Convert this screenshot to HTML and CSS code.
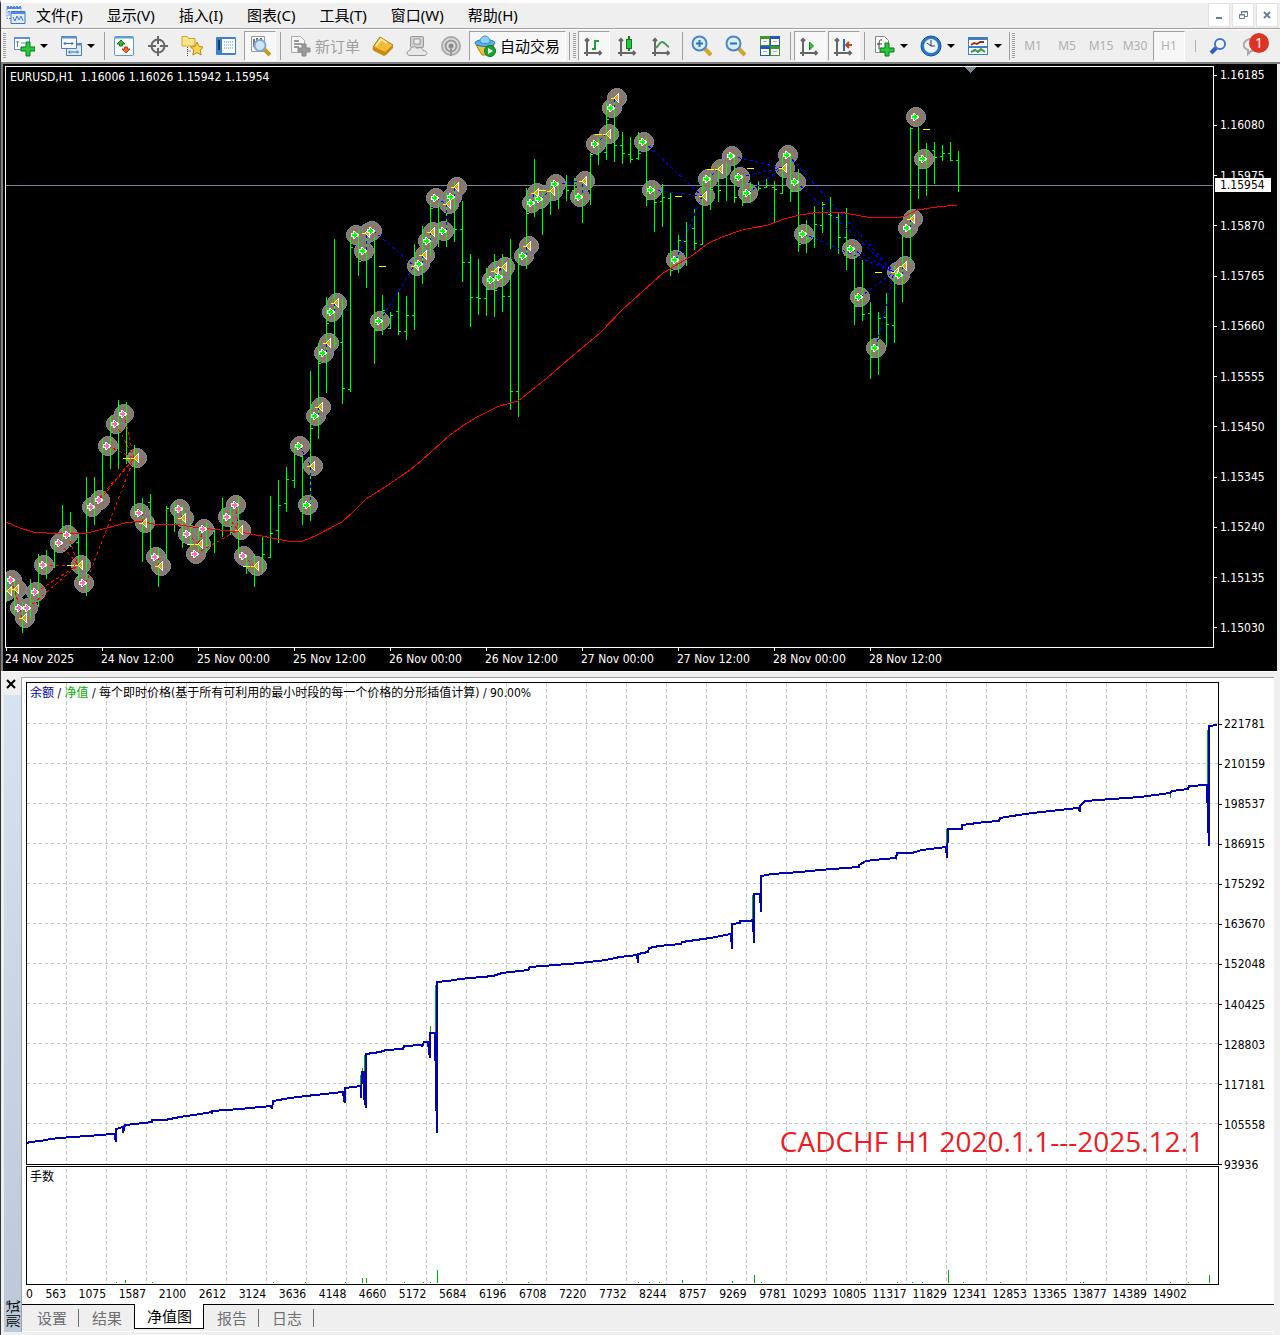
FILE: index.html
```html
<!DOCTYPE html>
<html lang="zh-CN">
<head>
<meta charset="utf-8">
<meta name="viewport" content="width=device-width, initial-scale=1">
<title>EURUSD,H1</title>
<link rel="stylesheet" href="styles.css">
</head>
<body>
<div class="window">
  <header class="menubar">
    <svg class="app-icon" width="20" height="20" viewBox="0 0 20 20" aria-hidden="true"><path d="M1 1.500h14v12H1z" fill="#fff" stroke="#4d8be0" stroke-dasharray="2 1"/><path d="M1 3h14" stroke="#4d8be0" stroke-width="2"/><path d="M3 11V6M2 7l1-1 1 1M6 8h3" stroke="#4d8be0" fill="none"/><path d="M5 6.500h14v12H5z" fill="#e4eefb" stroke="#3a78d2"/><path d="M5 8h14" stroke="#4d8be0" stroke-width="2"/><path d="M7 12l2 4 2-5 2 4 2-4 2 5" stroke="#3a78d2" fill="none"/></svg>
    <nav class="menus" aria-label="菜单">
      <button class="menu">文件(F)</button>
      <button class="menu">显示(V)</button>
      <button class="menu">插入(I)</button>
      <button class="menu">图表(C)</button>
      <button class="menu">工具(T)</button>
      <button class="menu">窗口(W)</button>
      <button class="menu">帮助(H)</button>
    </nav>
    <div class="window-controls">
      <button aria-label="最小化"><svg width="12" height="12" viewBox="0 0 12 12"><path d="M3 9h6" stroke="#6d7f92" stroke-width="2"/></svg></button>
      <button aria-label="还原"><svg width="12" height="12" viewBox="0 0 12 12"><path d="M4.500 5V2.500h6v5H8M4 3h7M2.500 5.500h5v4h-5zM2 6h6" fill="none" stroke="#6d7f92"/></svg></button>
      <button aria-label="关闭"><svg width="12" height="12" viewBox="0 0 12 12"><path d="M3 3l6 6M9 3l-6 6" stroke="#6d7f92" stroke-width="2"/></svg></button>
    </div>
  </header>

  <div class="toolbar" role="toolbar" aria-label="工具栏">
    <span class="grip"></span>
    <button class="tool tool-drop" aria-label="新图表"><svg class="icon" viewBox="0 0 22 22"><path d="M1.500 2.500h15v12h-15z" fill="#fff" stroke="#5b93cc"/><path d="M1 3h16" stroke="#5b93cc" stroke-width="2"/><path d="M4.500 12V6M3 7.500L4.500 6 6 7.500M8 8h4" stroke="#6688aa" fill="none"/><path d="M13 7h4v5h5v4h-5v5h-4v-5H8v-4h5z" fill="#27c83c" stroke="#0a7a18"/></svg><span class="caret"></span></button>
    <button class="tool tool-drop" aria-label="模板组"><svg class="icon" viewBox="0 0 22 22"><path d="M6.500 8.500h15v12h-15z" fill="#dcebfa" stroke="#4a7fbd"/><path d="M6 9.500h16" stroke="#5b93cc" stroke-width="2"/><path d="M1.500 1.500h15v12h-15z" fill="#f4f9ff" stroke="#4a7fbd"/><path d="M1 2.500h16" stroke="#5b93cc" stroke-width="2"/><path d="M4 8.500h9M5.500 7L4 8.500 5.500 10M11.500 7L13 8.500 11.500 10M9 17h9M10 15.500L8.500 17l1.500 1.500M17 15.500l1.500 1.500-1.500 1.500" stroke="#456a96" fill="none"/></svg><span class="caret"></span></button>
    <span class="divider"></span>
    <button class="tool" aria-label="市场报价"><svg class="icon" viewBox="0 0 22 22"><rect x="1.500" y="1.500" width="19" height="19" rx="1" fill="#fff" stroke="#5a9bd8"/><path d="M2 2.500h18" stroke="#5a9bd8" stroke-width="2"/><path d="M8 5l4 4H9.500v2h-3V9H4z" fill="#35b535" stroke="#177a17"/><path d="M13 18l-4-4h2.500v-2h3v2H17z" fill="#f06a30" stroke="#b03c10"/></svg></button>
    <button class="tool" aria-label="十字准线"><svg class="icon" viewBox="0 0 22 22"><circle cx="11" cy="11" r="6.500" fill="none" stroke="#666" stroke-width="2"/><path d="M11 1v8M11 13v8M1 11h8M13 11h8" stroke="#666" stroke-width="2"/></svg></button>
    <button class="tool" aria-label="导航"><svg class="icon" viewBox="0 0 22 22"><path d="M1 11V1.500h5.500l1 2H14V11z" fill="#fbe58a" stroke="#cda62c"/><path d="M6.500 12v9M6.500 16h3" stroke="#555" stroke-dasharray="1 1"/><path d="M16 7l2 4.500 4.500.5-3.300 3 1 5L16 17.500 11.800 20l1-5-3.300-3 4.500-.5z" fill="#ffd54a" stroke="#b98a10"/></svg></button>
    <button class="tool" aria-label="终端"><svg class="icon" viewBox="0 0 22 22"><rect x="1" y="2" width="20" height="18" rx="1" fill="#3f7fc4"/><path d="M7 4h13v14H7z" fill="#fff"/><path d="M4 5v10" stroke="#153c66" stroke-width="2"/><path d="M9 7h10M9 10h10M9 13h10" stroke="#5a8bd0" stroke-dasharray="1 1"/></svg></button>
    <button class="tool is-pressed" aria-label="策略测试" aria-pressed="true"><svg class="icon" viewBox="0 0 22 22"><path d="M2.500 1.500h13v15h-13z" fill="#fff" stroke="#999"/><path d="M5 4v8M8 3v6M12 3v7" stroke="#777" stroke-width="2"/><path d="M15 14l6 6" stroke="#c99a22" stroke-width="4"/><circle cx="11" cy="10.500" r="5.500" fill="#cfe6fa" stroke="#7aa9d6" stroke-width="2"/></svg></button>
    <span class="divider"></span>
    <button class="tool tool-label is-off" disabled><svg class="icon" viewBox="0 0 22 22"><path d="M2.500 1.500h9l4 4v12h-13z" fill="#f6f6f6" stroke="#aaa"/><path d="M5 6h5M5 9h8M5 12h5" stroke="#999" stroke-width="2"/><path d="M13 9h4v4h4v4h-4v4h-4v-4H9v-4h4z" fill="#999" stroke="#888"/></svg>新订单</button>
    <button class="tool" aria-label="编辑器"><svg class="icon" viewBox="0 0 22 22"><path d="M1 12L8 2l13 8-7 8z" fill="#f0bd3a" stroke="#a87510"/><path d="M1 12c-1 2 0 3 1 4l10 5 2-1 7-7v-3l-8 7z" fill="#c78b14"/><path d="M4 11l5-7 6 4" stroke="#ffe9a0" stroke-width="2" fill="none"/></svg></button>
    <button class="tool" aria-label="云存储"><svg class="icon" viewBox="0 0 22 22"><rect x="4.500" y="1.500" width="13" height="11" rx="1" fill="#cfcfcf" stroke="#999"/><path d="M8 4h6v5H8z" fill="#eee" stroke="#999"/><path d="M4 20.500c-4 0-4-5 0-5 0-4 6-5 7-2 3-2 6 0 6 2 5 0 5 5 1 5z" fill="#e8e8e8" stroke="#999"/></svg></button>
    <button class="tool" aria-label="信号"><svg class="icon" viewBox="0 0 22 22"><circle cx="11" cy="11" r="9" fill="#ddd" stroke="#aaa" stroke-width="2"/><circle cx="11" cy="11" r="5.500" fill="none" stroke="#999" stroke-width="2"/><circle cx="11" cy="11" r="2.500" fill="#888"/><path d="M11 12v9" stroke="#999" stroke-width="2"/></svg></button>
    <button class="tool tool-label tool-auto is-pressed" aria-pressed="true"><svg class="icon" viewBox="0 0 22 22"><path d="M2 10h18l-5 10H8z" fill="#e9c33c" stroke="#a8811a"/><ellipse cx="11" cy="8" rx="10" ry="3.500" fill="#5aaee0" stroke="#2d7ab0"/><path d="M6 7c0-8 10-8 10 0-2 2-8 2-10 0z" fill="#8fd0f5" stroke="#3b8cc4"/><circle cx="16" cy="16" r="5.500" fill="#17a82c" stroke="#0c7a1c"/><path d="M14 13l5 3-5 3z" fill="#fff"/></svg>自动交易</button>
    <span class="divider even"></span>
    <span class="grip"></span>
    <button class="tool is-pressed" aria-label="柱状图" aria-pressed="true"><svg class="icon" viewBox="0 0 22 22"><path d="M4 4v17M1 18h17M2 6l2-2 2 2M16 16l2 2-2 2" fill="none" stroke="#666" stroke-width="2"/><path d="M12 5v10M9 14h3M12 6h4" fill="none" stroke="#2a9a3a" stroke-width="2"/></svg></button>
    <button class="tool" aria-label="阴阳烛"><svg class="icon" viewBox="0 0 22 22"><path d="M4 4v17M1 18h17M2 6l2-2 2 2M16 16l2 2-2 2" fill="none" stroke="#666" stroke-width="2"/><path d="M12 1v15" stroke="#0f7a20" stroke-width="2"/><rect x="9.500" y="4.500" width="5" height="9" fill="#22c83a" stroke="#0f7a20"/></svg></button>
    <button class="tool" aria-label="折线图"><svg class="icon" viewBox="0 0 22 22"><path d="M4 4v17M1 18h17M2 6l2-2 2 2M16 16l2 2-2 2" fill="none" stroke="#666" stroke-width="2"/><path d="M4 13c4-1 4-6 7-6s3 3 7 5" fill="none" stroke="#4a9a55" stroke-width="2"/></svg></button>
    <span class="divider"></span>
    <button class="tool" aria-label="放大"><svg class="icon" viewBox="0 0 22 22"><path d="M14 14l6 6" stroke="#d3a32c" stroke-width="4"/><circle cx="8.500" cy="8.500" r="7" fill="#d9eefc" stroke="#4a86c8" stroke-width="2"/><path d="M8.500 5v7M5 8.500h7" stroke="#2f6fb4" stroke-width="2"/></svg></button>
    <button class="tool" aria-label="缩小"><svg class="icon" viewBox="0 0 22 22"><path d="M14 14l6 6" stroke="#d3a32c" stroke-width="4"/><circle cx="8.500" cy="8.500" r="7" fill="#d9eefc" stroke="#4a86c8" stroke-width="2"/><path d="M5 8.500h7" stroke="#2f6fb4" stroke-width="2"/></svg></button>
    <button class="tool" aria-label="平铺窗口"><svg class="icon" viewBox="0 0 22 22"><path d="M1 1h10v10H1zM11 11h10v10H11z" fill="#3a9a28"/><path d="M11 1h10v10H11zM1 11h10v10H1z" fill="#2458b8"/><path d="M2 4h8v6H2zM12 4h8v6h-8zM2 14h8v6H2zM12 14h8v6h-8z" fill="#fff"/><path d="M4 6.500h4M14 6.500h4M4 16.500h4M14 16.500h4" stroke="#9bb8d8"/></svg></button>
    <span class="divider"></span>
    <button class="tool is-pressed" aria-label="自动滚动" aria-pressed="true"><svg class="icon" viewBox="0 0 22 22"><path d="M4 4v17M1 18h17M2 6l2-2 2 2M16 16l2 2-2 2" fill="none" stroke="#666" stroke-width="2"/><path d="M10.500 7l4 4-4 4z" fill="#2fc244" stroke="#14802a"/></svg></button>
    <button class="tool is-pressed" aria-label="图表平移" aria-pressed="true"><svg class="icon" viewBox="0 0 22 22"><path d="M4 4v17M1 18h17M2 6l2-2 2 2M16 16l2 2-2 2" fill="none" stroke="#666" stroke-width="2"/><path d="M11 4v12" stroke="#2a6ab0" stroke-width="2"/><path d="M13 10h6M16 7l-3 3 3 3" fill="none" stroke="#c4441c" stroke-width="2"/></svg></button>
    <span class="divider"></span>
    <button class="tool tool-drop" aria-label="指标"><svg class="icon" viewBox="0 0 22 22"><path d="M2.500 1.500h9l4 4v12h-13z" fill="#fff" stroke="#888"/><path d="M9 5c-3-1-3 2-3 9M4 9h5" fill="none" stroke="#333"/><path d="M12 8h4v5h5v4h-5v4h-4v-4H7v-4h5z" fill="#27c83c" stroke="#0a7a18"/></svg><span class="caret"></span></button>
    <button class="tool tool-drop" aria-label="周期"><svg class="icon" viewBox="0 0 22 22"><circle cx="11" cy="11" r="10" fill="#2a78cc" stroke="#134f94"/><circle cx="11" cy="11" r="7" fill="#eef6ff"/><path d="M11 5v6h4M7 8l4 3" fill="none" stroke="#333"/></svg><span class="caret"></span></button>
    <button class="tool tool-drop" aria-label="模板"><svg class="icon" viewBox="0 0 22 22"><rect x="1.500" y="2.500" width="19" height="17" fill="#fff" stroke="#3f7fc4"/><path d="M1 4h20M1 12h20" stroke="#3f7fc4" stroke-width="2"/><path d="M4 10l3-2 3 1 3-2 4 0" fill="none" stroke="#9c2c1c" stroke-width="2"/><path d="M4 17l4-2 3 2 3-3 4 3" fill="none" stroke="#2f9a3c" stroke-width="2"/></svg><span class="caret"></span></button>
    <span class="divider tight"></span>
    <span class="grip"></span>
    <button class="tool period">M1</button>
    <button class="tool period">M5</button>
    <button class="tool period">M15</button>
    <button class="tool period">M30</button>
    <button class="tool period is-pressed" aria-pressed="true">H1</button>
    <span class="cut-off"></span>
    <div class="corner-tools">
      <button class="corner" aria-label="搜索"><svg width="18" height="18" viewBox="0 0 18 18"><path d="M8 10l-6 6" stroke="#2f5fc4" stroke-width="4"/><circle cx="11" cy="7" r="5" fill="#f6faff" stroke="#3f74d4" stroke-width="2"/></svg></button>
      <button class="corner" aria-label="消息"><svg width="22" height="20" viewBox="0 0 22 20"><path d="M5 18v-4C-3 11 1 2 10 3c10 0 12 11-2 12z" fill="#eee" stroke="#aaa" stroke-width="2"/></svg><span class="badge">1</span></button>
    </div>
  </div>

  <main>
    <section class="price" aria-label="EURUSD,H1">
      <div class="price-plot">
        <p class="caption">EURUSD,H1&nbsp; 1.16006 1.16026 1.15942 1.15954</p>
        <svg class="plot" viewBox="6 67 1207 580" shape-rendering="crispEdges" aria-hidden="true">
          <defs>
            <marker id="disc" markerUnits="userSpaceOnUse" markerWidth="22" markerHeight="22" viewBox="-11 -11 22 22"><circle r="9.500" fill="#8a796b" stroke="#778899"/></marker>
            <marker id="buy" markerUnits="userSpaceOnUse" markerWidth="22" markerHeight="22" viewBox="-11 -11 22 22"><path d="M-4.500-1.500h2v-2h1L2.500 0l-4 3.500h-1v-2h-2z" fill="#0f0" stroke="#fff"/></marker>
            <marker id="sell" markerUnits="userSpaceOnUse" markerWidth="22" markerHeight="22" viewBox="-11 -11 22 22"><path d="M-4.500-1.500h2v-2h1L2.500 0l-4 3.500h-1v-2h-2z" fill="#ff69b4" stroke="#fff"/></marker>
            <marker id="exit" markerUnits="userSpaceOnUse" markerWidth="22" markerHeight="22" viewBox="-11 -11 22 22"><path d="M-3 0l4-4v8z" fill="#daa520" stroke="#fff"/><path d="M-6 .5h4" stroke="#ff0"/></marker>
          </defs>
          <path d="M6 185.500H1213" stroke="#778899"/>
          <path class="marks" marker-start="url(#disc)" marker-mid="url(#disc)" marker-end="url(#disc)" d="M7 591L12 580L17 589L20 608L28 608L25 618L36 592L44 565L60 543L68 535L81 565L84 583L92 507L100 500L108 446L116 424L124 414L137 458L140 513L145 523L156 557L161 566L180 509L184 518L188 534L204 529L201 544L196 554L228 517L236 505L241 530L244 556L257 566L300 446L313 466L308 505L316 416L321 407L324 353L329 343L332 312L337 303L356 235L364 251L368 233L372 231L380 321L417 266L420 264L425 255L428 241L433 232L436 198L444 231L449 204L452 197L457 187L492 280L497 271L500 277L505 267L524 256L529 246L532 203L537 193L540 199L553 191L556 184L580 197L585 181L596 144L609 134L612 108L617 98L644 142L652 190L676 260L705 196L708 179L721 169L732 156L740 177L748 193L785 168L788 155L796 182L804 234L852 249L860 297L876 348L897 272L900 275L905 266L908 228L913 219L916 117L924 159"/>
          <path d="M6.500 577V602M14.500 580V614M22.500 602V633M30.500 579V619M38.500 554V607M46.500 550V579M54.500 540V568M62.500 505V540M70.500 512V547M78.500 533V580M86.500 477V596M94.500 477V525M102.500 439V497M110.500 416V469M118.500 400V469M126.500 402V464M134.500 445V517M142.500 498V562M150.500 494V557M158.500 548V587M166.500 506V559M174.500 501V532M182.500 505V548M190.500 523V547M198.500 527V553M206.500 522V553M214.500 528V553M222.500 498V537M230.500 508V535M238.500 497V555M246.500 555V574M254.500 554V587M262.500 537V572M270.500 496V558M278.500 480V543M286.500 467V512M294.500 445V488M302.500 456V525M310.500 371V521M318.500 343V439M326.500 297V393M334.500 239V347M342.500 298V404M350.500 238V392M358.500 231V276M366.500 232V288M374.500 237V364M382.500 295V335M390.500 312V329M398.500 292V335M406.500 296V340M414.500 244V330M422.500 226V284M430.500 203V256M438.500 203V247M446.500 193V247M454.500 182V242M462.500 201V282M470.500 254V327M478.500 259V315M486.500 268V316M494.500 254V317M502.500 254V312M510.500 239V410M518.500 249V417M526.500 188V269M534.500 159V217M542.500 192V235M550.500 180V215M558.500 182V209M566.500 175V201M574.500 178V202M582.500 180V223M590.500 153V205M598.500 138V165M606.500 102V160M614.500 98V162M622.500 132V164M630.500 137V163M638.500 132V160M646.500 137V206M654.500 185V232M662.500 184V227M670.500 193V276M678.500 235V273M686.500 222V266M694.500 209V250M702.500 178V245M710.500 173V210M718.500 165V202M726.500 162V201M734.500 157V203M742.500 175V206M750.500 182V203M758.500 181V191M766.500 179V188M774.500 181V223M782.500 156V194M790.500 153V202M798.500 169V252M806.500 220V253M814.500 206V248M822.500 202V233M830.500 197V249M838.500 213V254M846.500 208V270M854.500 247V325M862.500 260V321M870.500 302V379M878.500 312V375M886.500 293V347M894.500 266V343M902.500 235V302M910.500 127V262M918.500 127V199M926.500 143V196M934.500 142V184M942.500 145V161M950.500 142V161M958.500 151V192" stroke="#0f0"/>
          <path d="M76 542.500h2M148 502.500h2M167 508.500h2M207 545.500h2M212 544.500h2M223 530.500h2M263 554.500h2M268 557.500h2M271 533.500h2M276 530.500h2M279 505.500h2M284 503.500h2M287 479.500h2M292 480.500h2M300 456.500h2M311 428.500h2M319 363.500h2M327 323.500h2M335 343.500h2M340 342.500h2M343 388.500h2M348 389.500h2M351 247.500h2M359 261.500h2M375 330.500h2M383 310.500h2M388 328.500h2M391 315.500h2M396 311.500h2M399 331.500h2M404 331.500h2M407 315.500h2M412 315.500h2M431 208.500h2M455 229.500h2M460 229.500h2M463 262.500h2M468 262.500h2M471 297.500h2M476 297.500h2M479 298.500h2M484 298.500h2M487 289.500h2M495 290.500h2M503 296.500h2M508 296.500h2M511 391.500h2M516 391.500h2M527 213.500h2M567 190.500h2M572 190.500h2M591 154.500h2M596 154.500h2M604 152.500h2M607 119.500h2M615 145.500h2M620 145.500h2M623 153.500h2M628 154.500h2M631 159.500h2M636 158.500h2M639 153.500h2M647 199.500h2M655 202.500h2M660 201.500h2M663 197.500h2M668 198.500h2M671 270.500h2M679 240.500h2M684 241.500h2M687 230.500h2M692 228.500h2M695 243.500h2M700 244.500h2M703 188.500h2M711 189.500h2M719 190.500h2M735 197.500h2M743 202.500h2M751 187.500h2M759 188.500h2M764 187.500h2M767 185.500h2M772 187.500h2M775 189.500h2M780 193.500h2M791 191.500h2M796 191.500h2M799 244.500h2M807 238.500h2M815 224.500h2M820 225.500h2M823 204.500h2M828 214.500h2M831 215.500h2M836 217.500h2M839 237.500h2M844 237.500h2M855 306.500h2M863 314.500h2M868 313.500h2M871 357.500h2M879 318.500h2M884 317.500h2M887 324.500h2M892 325.500h2M911 128.500h2M919 168.500h2M927 150.500h2M932 150.500h2M935 157.500h2M940 156.500h2M943 153.500h2M948 153.500h2M951 160.500h2M956 160.500h2M959 185.500h2" stroke="#0f0"/>
          <path fill="none" stroke="#f00" d="M6 522L20 528L33 532L47 533H87L107 528L125 523L142 521L153 524H173L200 528L240 532L267 537L287 541H303L315 536L342 522L354 511L366 499L385 487L410 470L422 460L450 435L464 425L477 417L497 407L510 403L518 401L527 394L547 378L570 358L600 333L623 309L663 273L680 263L693 255L707 244L722 237L742 230L768 225L784 219L800 215L820 212H840L850 214L867 217L897 218L905 216L917 210L937 207L957 205"/>
          <path fill="none" stroke="#f00" stroke-dasharray="3 3" d="M108 446L134 458M116 424L134 458M124 414L134 458M92 507L134 458M100 500L134 458M86 583L106 531L134 458M44 565H78M36 592L78 565M28 608L78 565M60 543L78 565M68 535L78 565M12 580L22 617M142 513V523M158 557V566M180 509L182 518M188 534L198 544M204 529L198 544M196 554L238 530M228 517L238 530M236 505L238 530M244 556L254 566"/>
          <path fill="none" stroke="#00f" stroke-dasharray="3 3" d="M300 446L310.500 466V505M318.500 416V407M326.500 353V343M334.500 312V303M356 235L366 233V251M374 231L414 266M380 321L414 266M422.500 264V255M430.500 241V232M436 198L446.500 204V231M454.500 197V187M492 280L502 267M526.500 256V246M532 203L534 193M540 199L550 191M556 184L582.500 181V197M596 144L606 134M614.500 108V98M644 142L702 196M652 190L702 196M676 260L702 196M708 179L718 169M732 156L782 168M740 177L782 168M748 193L782 168M788 155L894 272M796 182L894 272M804 234L894 272M852 249L894 272M860 297L894 272M876 348L894 272M902.500 275V266M910.500 228V219"/>
          <path class="marks" marker-start="url(#sell)" marker-mid="url(#sell)" marker-end="url(#sell)" d="M12 580L20 608L28 608L36 592L44 565L60 543L68 535L84 583L92 507L100 500L108 446L116 424L124 414L140 513L156 557L180 509L188 534L196 554L204 529L228 517L236 505L244 556"/>
          <path class="marks" marker-start="url(#exit)" marker-mid="url(#exit)" marker-end="url(#exit)" d="M10 591L17 589L25 618L81 565L137 458L145 523L161 566L184 518L201 544L241 530L257 566L313 466L321 407L329 343L337 303L368 233L417 266L425 255L433 232L449 204L457 187L497 271L505 267L529 246L537 193L553 191L585 181L609 134L617 98L705 196L721 169L785 168L897 272L905 266L913 219"/>
          <path class="marks" marker-start="url(#buy)" marker-mid="url(#buy)" marker-end="url(#buy)" d="M300 446L308 505L316 416L324 353L332 312L356 235L364 251L372 231L380 321L420 264L428 241L436 198L444 231L452 197L492 280L500 277L524 256L532 203L540 199L556 184L580 197L596 144L612 108L644 142L652 190L676 260L708 179L732 156L740 177L748 193L788 155L796 182L804 234L852 249L860 297L876 348L900 275L908 228L916 117L924 159"/>
          <path stroke="#ff0" d="M67 565.500h7M123 458.500h7M187 544.500h7M243 566.500h7M379 266.500h7M539 190.500h7M595 134.500h7M675 196.500h7M707 169.500h7M747 168.500h7M875 272.500h7M923 129.500h7"/>
          <path d="M964 67h13l-6.500 6z" fill="#778899"/>
        </svg>
      </div>
      <ol class="price-axis">
        <li>1.16185</li><li>1.16080</li><li>1.15975</li><li>1.15870</li><li>1.15765</li><li>1.15660</li><li>1.15555</li><li>1.15450</li><li>1.15345</li><li>1.15240</li><li>1.15135</li><li>1.15030</li>
      </ol>
      <span class="last-price">1.15954</span>
      <ol class="time-axis">
        <li>24 Nov 2025</li><li>24 Nov 12:00</li><li>25 Nov 00:00</li><li>25 Nov 12:00</li><li>26 Nov 00:00</li><li>26 Nov 12:00</li><li>27 Nov 00:00</li><li>27 Nov 12:00</li><li>28 Nov 00:00</li><li>28 Nov 12:00</li>
      </ol>
    </section>

    <section class="tester" aria-label="测试">
      <div class="side">
        <button class="side-close" aria-label="关闭"><svg width="10" height="10" viewBox="0 0 10 10"><path d="M1 1l8 8M9 1l-8 8" stroke="#000" stroke-width="2"/></svg></button>
        <div class="side-strip"><span>测试</span></div>
      </div>
      <div class="tester-main">
        <div class="graph">
          <div class="frame">
            <p class="legend"><span class="balance">余额</span> / <span class="equity">净值</span> / 每个即时价格(基于所有可利用的最小时段的每一个价格的分形插值计算) / 90.00%</p>
            <svg class="plot" viewBox="27 683 1191 481" shape-rendering="crispEdges" aria-hidden="true">
              <defs><pattern id="columns" x="66" y="683" width="40" height="6" patternUnits="userSpaceOnUse"><path d="M.5 0v4" stroke="#c8c8c8"/></pattern></defs>
              <path d="M27 683h1191v481H27z" fill="url(#columns)"/>
              <path d="M27 723.500h1191M27 763.500h1191M27 803.500h1191M27 843.500h1191M27 883.500h1191M27 923.500h1191M27 963.500h1191M27 1003.500h1191M27 1043.500h1191M27 1083.500h1191M27 1123.500h1191" stroke="#c8c8c8" stroke-dasharray="3 3"/>
              <path d="M123.500 1125v6M360.500 1075v12M362.500 1068v8M364.500 1055v18M430.500 1026v8M435.500 985v48M752.500 895v26M896 854v6M946.500 829v18M1170 793v5M1207.500 730v56" stroke="#00b000"/>
              <path fill="none" stroke="#0000b0" stroke-width="2" d="M27 1143L30 1142L41 1141L50 1139L72 1137L88 1136L112 1134H115V1138L116 1142V1129L123 1127V1133L125 1125L135 1124L152 1122V1120H165L180 1117L200 1114L212 1112V1114V1111L240 1109L271 1106L272 1109L273 1101L290 1098L306 1096L343 1092L344 1100L345 1103V1088L361 1086V1098L362 1072H364V1097L366 1108V1054L380 1052L386 1050L403 1049L404 1046L422 1045V1047L424 1042H428L429 1051L430 1058V1033H435L436 1088L437 1133V982L448 981L460 979L493 976L502 973L528 970L530 967L580 963L606 960L620 957L637 955L638 963V954L648 952L649 948L659 946L681 944L682 942L710 938L731 934L732 949V924L740 923V921H750L753 920L754 943V894H760L761 912V876L772 874L800 872L820 870L859 867V865L866 861L884 859L896 858L897 853H912L922 850L946 847L947 858L948 829H962V825L985 822L999 821L1000 818L1025 814L1050 811L1078 808L1080 812V806L1085 801L1140 797L1170 793L1172 791L1188 789L1189 786L1207 785L1208 820L1209 846V726L1217 725"/>
            </svg>
            <p class="note">CADCHF H1 2020.1.1---2025.12.1</p>
          </div>
          <ol class="money-axis">
            <li>221781</li><li>210159</li><li>198537</li><li>186915</li><li>175292</li><li>163670</li><li>152048</li><li>140425</li><li>128803</li><li>117181</li><li>105558</li><li>93936</li>
          </ol>
          <div class="frame">
            <p class="legend">手数</p>
            <svg class="plot" viewBox="27 1167 1191 117" shape-rendering="crispEdges" aria-hidden="true">
              <path d="M27 1167h1191v117H27z" fill="url(#columns)"/>
              <path d="M116.500 1282v1M125.500 1280v3M152.500 1282v1M273.500 1282v1M305.500 1282v1M345.500 1282v1M362.500 1278v5M366.500 1278v5M404.500 1282v1M423.500 1282v1M430.500 1282v1M437.500 1270v13M502.500 1282v1M528.500 1282v1M638.500 1282v1M649.500 1282v1M659.500 1282v1M682.500 1280v3M732.500 1281v2M754.500 1275v8M761.500 1282v1M860.500 1282v1M897.500 1282v1M912.500 1282v1M922.500 1282v1M948.500 1270v13M963.500 1282v1M1000.500 1282v1M1080.500 1282v1M1083.500 1282v1M1170.500 1282v1M1188.500 1282v1M1209.500 1275v8" stroke="#00b000"/>
            </svg>
          </div>
          <ol class="trade-axis">
            <li><span>0</span><span>563</span></li><li>1075</li><li>1587</li><li>2100</li><li>2612</li><li>3124</li><li>3636</li><li>4148</li><li>4660</li><li>5172</li><li>5684</li><li>6196</li><li>6708</li><li>7220</li><li>7732</li><li>8244</li><li>8757</li><li>9269</li><li>9781</li><li>10293</li><li>10805</li><li>11317</li><li>11829</li><li>12341</li><li>12853</li><li>13365</li><li>13877</li><li>14389</li><li>14902</li>
          </ol>
        </div>
        <nav class="tabs" aria-label="测试器">
          <button class="tab">设置</button>
          <button class="tab">结果</button>
          <button class="tab is-active" aria-current="page">净值图</button>
          <button class="tab">报告</button>
          <button class="tab">日志</button>
        </nav>
      </div>
    </section>
  </main>
</div>
</body>
</html>
```
FILE: styles.css
```css
* {
  box-sizing: border-box;
}

body {
  margin: 0;
  background: #efefef;
  color: #000;
  font-family: "Noto Sans", "Noto Sans CJK SC", sans-serif;
  font-size: 12px;
  line-height: 16px;
}

button {
  margin: 0;
  padding: 0;
  border: 0;
  background: none;
  color: inherit;
  font: inherit;
}

ol {
  margin: 0;
  padding: 0;
  list-style: none;
}

p {
  margin: 0;
}

svg {
  display: block;
  flex: none;
}

.window {
  border-top: 3px solid #fff;
  border-left: 1px solid #333;
}

/* Menu bar */
.menubar {
  display: flex;
  align-items: center;
  height: 27px;
  padding: 0 0 2px 5px;
  border-bottom: 1px solid #fff;
  box-shadow: inset 0 -1px #a0a0a0;
}

.menus {
  display: flex;
  flex: 1;
  gap: 24px;
  padding-left: 10px;
}

.menu {
  font-size: 15px;
  line-height: 24px;
  white-space: nowrap;
}

.window-controls {
  display: flex;
  gap: 2px;
  padding-right: 2px;
}

.window-controls button {
  display: grid;
  place-items: center;
  width: 22px;
  height: 24px;
  border: 1px solid #e2e2e2;
  background: #fff;
}

/* Toolbar */
.toolbar {
  position: relative;
  display: flex;
  align-items: center;
  gap: 2px;
  height: 34px;
  padding-left: 2px;
  border-bottom: 2px solid #808080;
  overflow: hidden;
}

.grip {
  flex: none;
  width: 3px;
  height: 26px;
  background: repeating-linear-gradient(#a0a0a0 0 1px, #efefef 1px 2px);
}

.divider {
  flex: none;
  width: 1px;
  height: 28px;
  margin: 0 1px 0 2px;
  background: #a0a0a0;
}

.divider.even {
  margin: 0 1px;
}

.divider.tight {
  margin: 0;
}

.tool {
  display: flex;
  flex: none;
  align-items: center;
  justify-content: center;
  width: 32px;
  height: 30px;
  border: 1px solid transparent;
}

.tool.is-pressed {
  border-color: #a0a0a0 #fff #fff #a0a0a0;
  background: #f7f7f7;
}

.icon {
  width: 22px;
  height: 22px;
}

.tool-drop {
  justify-content: flex-start;
  gap: 5px;
  width: 45px;
  padding-left: 4px;
}

.caret {
  border: 4px solid transparent;
  border-top-color: #000;
  border-bottom: 0;
}

.tool-label {
  justify-content: flex-start;
  gap: 4px;
  width: 81px;
  padding-left: 4px;
  font-size: 15px;
  white-space: nowrap;
}

.tool-auto {
  width: 97px;
}

.is-off {
  color: #a0a0a0;
}

.period {
  color: #b0b0b0;
}

.cut-off {
  width: 1px;
  height: 12px;
  margin-left: 8px;
  background: #b0b0b0;
}

.corner-tools {
  display: flex;
  flex: 1;
  align-items: center;
  justify-content: flex-end;
  gap: 16px;
  padding-right: 15px;
}

.corner {
  position: relative;
}

.badge {
  position: absolute;
  top: -3px;
  left: 6px;
  width: 20px;
  height: 20px;
  border-radius: 50%;
  background: #dd3322;
  color: #fff;
  font-size: 14px;
  line-height: 20px;
}

/* Price chart */
.price {
  position: relative;
  display: grid;
  grid-template-columns: minmax(0, 1fr) 63px;
  margin-right: 3px;
  padding: 2px 0 0 2px;
  border-left: 2px solid #808080;
  background: #000;
  color: #fff;
}

.price,
.graph {
  font-family: "DejaVu Sans Condensed", "Noto Sans", "Noto Sans CJK SC", sans-serif;
}

.price-plot {
  position: relative;
  border: 1px solid #fff;
}

.plot {
  width: 100%;
  height: auto;
}

.marks {
  fill: none;
  stroke: none;
}

.caption {
  position: absolute;
  top: 2px;
  left: 4px;
}

.price-axis {
  display: flex;
  flex-direction: column;
  justify-content: space-between;
  padding: 1px 0 12px;
}

.price-axis li,
.money-axis li {
  display: flex;
  align-items: center;
  gap: 3px;
}

.money-axis li {
  gap: 2px;
}

.price-axis li::before,
.money-axis li::before {
  width: 3px;
  height: 1px;
  background: currentColor;
  content: "";
}

.last-price {
  position: absolute;
  top: 114px;
  right: 6px;
  width: 56px;
  padding-left: 5px;
  background: #fff;
  color: #000;
  line-height: 14px;
}

.time-axis {
  display: grid;
  grid-column: 1 / -1;
  grid-template-columns: repeat(10, 96fr) 312fr;
  height: 23px;
}

.time-axis li {
  min-width: 0;
  white-space: nowrap;
}

.time-axis li::before {
  display: block;
  width: 1px;
  height: 3px;
  margin-left: 1px;
  background: #fff;
  content: "";
}

/* Strategy tester */
.tester {
  display: grid;
  grid-template-columns: 20px minmax(0, 1fr);
  padding: 5px 6px 3px 0;
  border-top: 1px solid #fff;
}

.side {
  display: flex;
  flex-direction: column;
  padding-left: 3px;
}

.side-close {
  display: grid;
  width: 14px;
  height: 18px;
  place-items: start center;
  padding-top: 2px;
}

.side-strip {
  display: flex;
  flex: 1;
  align-items: flex-end;
  width: 17px;
  padding-bottom: 4px;
  background: linear-gradient(#d6e3f0, #bac8d8);
}

.side-strip span {
  font-size: 14px;
  line-height: 17px;
  writing-mode: vertical-rl;
  text-orientation: sideways;
  transform: rotate(180deg);
}

.tester-main {
  border-top: 1px solid #a0a0a0;
  border-left: 1px solid #a0a0a0;
}

.graph {
  display: grid;
  grid-template-columns: minmax(0, 1fr) 55px;
  row-gap: 1px;
  padding: 4px 0 0 4px;
  border-bottom: 1px solid #000;
  background: #fff;
}

.frame {
  position: relative;
  border: 1px solid #000;
}

.legend {
  position: absolute;
  top: 2px;
  left: 3px;
}

.balance {
  color: #0000b0;
}

.equity {
  color: #00b000;
}

.note {
  position: absolute;
  right: 14px;
  bottom: 5px;
  color: #ed1c24;
  font-family: "Open Sans", sans-serif;
  font-size: 28px;
  line-height: 36px;
}

.money-axis {
  display: flex;
  flex-direction: column;
  justify-content: space-between;
  margin-bottom: -8px;
  padding-top: 34px;
}

.trade-axis {
  display: grid;
  grid-column: 1;
  grid-template-columns: repeat(29, 40fr) 32fr;
  height: 18px;
}

.trade-axis li {
  display: flex;
  justify-content: flex-end;
  min-width: 0;
}

.trade-axis li:first-child {
  justify-content: space-between;
}

.tabs {
  display: flex;
  height: 27px;
  border-bottom: 1px solid #fff;
}

.tab {
  position: relative;
  height: 25px;
  padding: 0 12px 0 13px;
  color: #707070;
  font-size: 15px;
  line-height: 24px;
}

.tab:first-child {
  padding-left: 15px;
}

.tab::after {
  position: absolute;
  top: 4px;
  right: 0;
  width: 1px;
  height: 18px;
  background: #707070;
  content: "";
}

.tab:nth-child(2)::after,
.is-active::after {
  display: none;
}

.is-active {
  margin-top: -1px;
  padding: 0 11px 0 12px;
  border: 1px solid #000;
  border-top: 0;
  background: #fff;
  color: #000;
}
```
